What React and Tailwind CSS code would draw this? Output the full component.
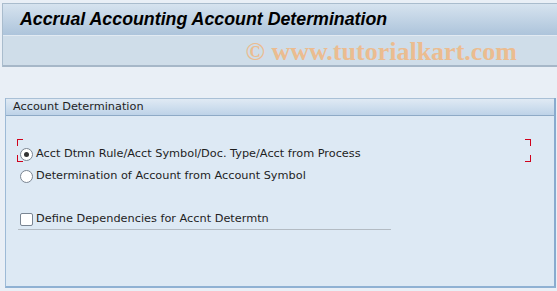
export default function App() {
  const tahoma = { fontFamily: 'Tahoma, "DejaVu Sans", sans-serif' };
  return (
    <div className="w-[557px] h-[291px] bg-[#e9eff6] overflow-hidden flex flex-col" style={tahoma}>
      <div className="pt-[3px] pl-[2px]">
        <div className="border-l border-t border-[#a9bccd]">
          <div className="h-[31px] bg-gradient-to-b from-[#d6e3ef] to-[#adc4db] flex items-center pl-[17px]">
            <span className="text-[17.8px] font-bold italic text-black leading-none" style={{ fontFamily: '"Liberation Sans", Arial, sans-serif' }}>
              Accrual Accounting Account Determination
            </span>
          </div>
          <div className="h-px bg-[#e2eaf2]" />
          <div className="h-[31px] bg-[#cfdde9] border-b-2 border-[#a6b7c8] flex items-center justify-end pr-[40px]">
            <span className="text-[26px] font-bold text-[#ebbc90] leading-none pt-[2px]" style={{ fontFamily: '"Liberation Serif", serif' }}>
              © www.tutorialkart.com
            </span>
          </div>
        </div>
      </div>
      <div className="flex-1 pl-[5px] pt-[31px] pb-[3px] pr-px flex">
        <div className="flex-1 flex flex-col border-l border-[#9dbad6] border-r-2 border-r-[#88abce] border-b-2 border-b-[#8fb1d3] bg-[#dde9f4]">
          <div className="h-[18px] border-t border-[#a9c0d6] border-b border-b-[#8eaac6] bg-gradient-to-b from-[#e0eaf4] to-[#bed3e8] flex items-center pl-[7px] text-[11.3px] text-[#1f1f1f] pt-px">
            Account Determination
          </div>
          <div className="relative flex-1 text-[11.3px] text-[#1e1e1e]">
            <div className="pt-[27px] pl-[14px] flex flex-col">
              <label className="flex items-center h-[22px] gap-[3px]">
                <span className="w-[13px] h-[13px] rounded-full border border-[#7a8592] bg-white flex items-center justify-center">
                  <span className="w-[5px] h-[5px] rounded-full bg-[#333]" />
                </span>
                <span>Acct Dtmn Rule/Acct Symbol/Doc. Type/Acct from Process</span>
              </label>
              <label className="flex items-center h-[22px] gap-[3px]">
                <span className="w-[13px] h-[13px] rounded-full border border-[#7a8592] bg-white" />
                <span>Determination of Account from Account Symbol</span>
              </label>
              <div className="h-[23px]" />
              <label className="flex items-center h-[20px] gap-[3px] w-[373px] border-b border-[#b3bbc3] -ml-[2px] pl-[2px]">
                <span className="w-[13px] h-[13px] rounded-[2px] border border-[#7a8592] bg-white" />
                <span>Define Dependencies for Accnt Determtn</span>
              </label>
            </div>
            <div className="absolute left-[11px] top-[23px] w-[6px] h-[7px] border-l border-t border-[#d0021b]" />
            <div className="absolute left-[11px] top-[39px] w-[6px] h-[7px] border-l border-b border-[#d0021b]" />
            <div className="absolute left-[519px] top-[23px] w-[6px] h-[7px] border-r border-t border-[#d0021b]" />
            <div className="absolute left-[519px] top-[39px] w-[6px] h-[7px] border-r border-b border-[#d0021b]" />
          </div>
        </div>
      </div>
    </div>
  );
}
